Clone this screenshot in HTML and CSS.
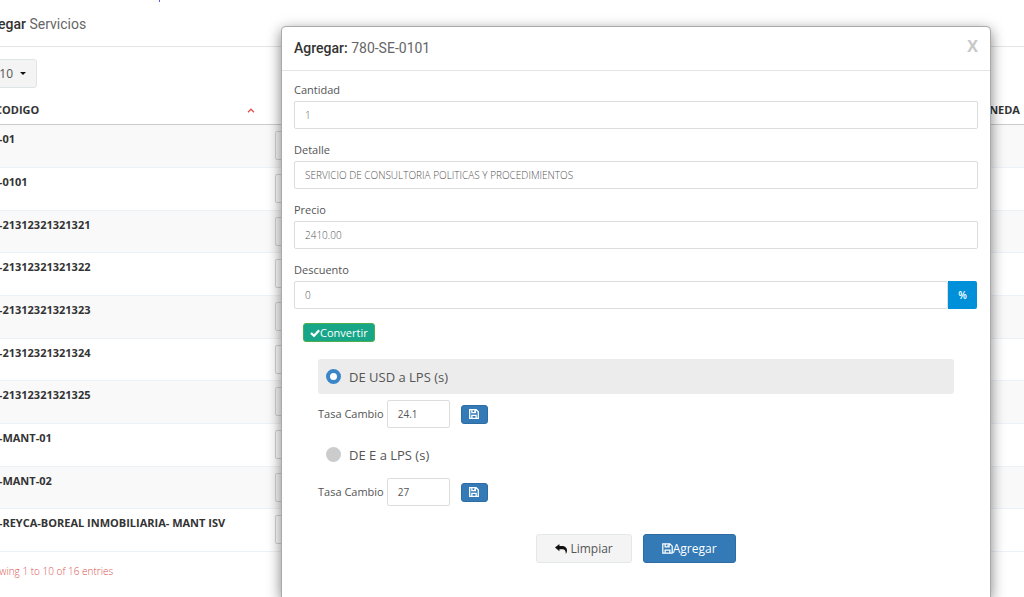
FILE: index.html
```html
<!DOCTYPE html>
<html lang="es">
<head>
  <meta charset="UTF-8">
  <title>Agregar Servicios</title>
  <link rel="stylesheet" href="styles.css">
</head>
<body>
  <div class="page">
    <div class="tick"></div>
    <h4 class="page-title"><b>Agregar</b> Servicios</h4>
    <div class="toolbar">
      <button class="length" type="button">10 <span class="caret"></span></button>
    </div>
    <table class="services">
      <thead>
        <tr>
          <th class="col-code"><span>CODIGO</span>
            <svg class="sort" width="8" height="5" viewBox="0 0 8 5"><path d="M1 4.2L4 1.2L7 4.2" fill="none" stroke="#d9534f" stroke-width="1.3"/></svg>
          </th>
          <th></th>
          <th class="col-coin">MONEDA</th>
        </tr>
      </thead>
      <tbody>
        <tr><td>780-01</td><td><input type="text" aria-label="Detalle"></td><td></td></tr>
        <tr><td>780-0101</td><td><input type="text" aria-label="Detalle"></td><td></td></tr>
        <tr><td>780-21312321321321</td><td><input type="text" aria-label="Detalle"></td><td></td></tr>
        <tr><td>780-21312321321322</td><td><input type="text" aria-label="Detalle"></td><td></td></tr>
        <tr><td>780-21312321321323</td><td><input type="text" aria-label="Detalle"></td><td></td></tr>
        <tr><td>780-21312321321324</td><td><input type="text" aria-label="Detalle"></td><td></td></tr>
        <tr><td>780-21312321321325</td><td><input type="text" aria-label="Detalle"></td><td></td></tr>
        <tr><td>780-MANT-01</td><td><input type="text" aria-label="Detalle"></td><td></td></tr>
        <tr><td>780-MANT-02</td><td><input type="text" aria-label="Detalle"></td><td></td></tr>
        <tr><td>780-REYCA-BOREAL INMOBILIARIA- MANT ISV</td><td><input type="text" aria-label="Detalle"></td><td></td></tr>
      </tbody>
    </table>
    <p class="info">Showing 1 to 10 of 16 entries</p>
  </div>

  <div class="modal">
    <div class="modal-header">
      <h4><b>Agregar:</b> 780-SE-0101</h4>
      <button class="close" type="button">X</button>
    </div>
    <form class="modal-body">
      <div class="form-group">
        <label for="cantidad">Cantidad</label>
        <input class="form-control" type="text" id="cantidad" value="1">
      </div>
      <div class="form-group">
        <label for="detalle">Detalle</label>
        <input class="form-control" type="text" id="detalle" value="SERVICIO DE CONSULTORIA POLITICAS Y PROCEDIMIENTOS">
      </div>
      <div class="form-group">
        <label for="precio">Precio</label>
        <input class="form-control" type="text" id="precio" value="2410.00">
      </div>
      <div class="form-group">
        <label for="descuento">Descuento</label>
        <div class="input-group">
          <input class="form-control" type="text" id="descuento" value="0">
          <button class="addon" type="button">%</button>
        </div>
      </div>
      <button class="btn-convert" type="button"><svg width="10" height="8" viewBox="0 0 10 8"><path d="M1 4L4 6.8L9.2 1.2" fill="none" stroke="#fff" stroke-width="2.3"/></svg>Convertir</button>

      <div class="rates">
        <label class="radio active"><input type="radio" name="moneda" checked>DE USD a LPS (s)</label>
        <div class="rate">
          <label for="tasa-usd">Tasa Cambio</label>
          <input class="form-control" type="text" id="tasa-usd" value="24.1">
          <button class="btn-save" type="button" aria-label="Guardar"><svg width="10" height="10" viewBox="0 0 14 14"><path d="M1 1H10L13 4V13H1ZM4 1V5H9V1M4 13V9H10V13" fill="none" stroke="#fff" stroke-width="1.8"/><path d="M7 2H8.4V4H7Z" fill="#fff"/></svg></button>
        </div>
        <label class="radio"><input type="radio" name="moneda">DE E a LPS (s)</label>
        <div class="rate">
          <label for="tasa-eur">Tasa Cambio</label>
          <input class="form-control" type="text" id="tasa-eur" value="27">
          <button class="btn-save" type="button" aria-label="Guardar"><svg width="10" height="10" viewBox="0 0 14 14"><path d="M1 1H10L13 4V13H1ZM4 1V5H9V1M4 13V9H10V13" fill="none" stroke="#fff" stroke-width="1.8"/><path d="M7 2H8.4V4H7Z" fill="#fff"/></svg></button>
        </div>
      </div>

      <div class="actions">
        <button class="btn" type="reset"><svg class="reply" width="12" height="10" viewBox="0 0 12 10"><path d="M0 3.5L4.4 0V2H7C10.5 2 12 4.2 12 6.5C12 8 11.4 9.2 10.8 10C10.9 7 10 5.3 7 5.3H4.4V7.2Z" fill="#111"/></svg>Limpiar</button>
        <button class="btn btn-primary" type="submit"><svg width="11" height="11" viewBox="0 0 14 14"><path d="M1 1H10L13 4V13H1ZM4 1V5H9V1M4 13V9H10V13" fill="none" stroke="#fff" stroke-width="1.6"/><path d="M7 2H8.4V4H7Z" fill="#fff"/></svg>Agregar</button>
      </div>
    </form>
  </div>
</body>
</html>
```
FILE: styles.css
```css
* {
  box-sizing: border-box;
}
body {
  margin: 0;
  height: 100vh;
  overflow: hidden;
  background: #fff;
  color: #555;
  font: 11px/18px "Open Sans", sans-serif;
}
button, input {
  font: inherit;
  color: inherit;
}
button {
  cursor: pointer;
}
h4 {
  margin: 0;
  color: #666;
  font: 400 14px/20px Roboto, sans-serif;
}
h4 b {
  color: #333;
  font-weight: 500;
}

/* services list, scrolled under the left edge */
.page {
  margin-left: -30px;
}
.tick {
  width: 1px;
  height: 2px;
  margin-left: 189px;
  background: #55f;
}
.page-title {
  padding: 12px 0;
  padding-left: 6px;
  border-bottom: 1px solid #e4e4e4;
}
.toolbar {
  padding-top: 12px;
}
.length {
  height: 29px;
  width: 67px;
  padding: 0 10px;
  border: 1px solid #dfe5e7;
  border-radius: 3px;
  background: #f4f4f4;
  display: flex;
  align-items: center;
  justify-content: flex-end;
  gap: 7px;
  font-size: 12px;
}
.caret {
  border: 3px solid transparent;
  border-top: 3px solid #111;
  border-bottom: 0;
}
.services {
  width: 100%;
  margin-top: 8px;
  border-collapse: separate;
  border-spacing: 0;
  table-layout: fixed;
}
.services th {
  height: 29px;
  padding: 0;
  border-bottom: 1px solid #ccc;
  color: #333;
  font-weight: 700;
  text-align: left;
}
.services .col-code {
  width: 298px;
  padding-left: 25px;
}
.services .col-coin {
  width: 54px;
}
.sort {
  float: right;
  margin: 7px 13px 0 0;
}
.services td {
  height: 43px;
  padding: 6px 7px;
  border-bottom: 1px solid #edf2f6;
  vertical-align: top;
  white-space: nowrap;
}
.services tr:nth-child(3n) td {
  height: 42px;
}
.services td:first-child {
  padding: 5px 10px;
  color: #333;
  font-weight: 700;
}
.services tbody tr:nth-child(odd) {
  background: #f9f9f9;
}
.services input {
  display: block;
  width: 100%;
  height: 29px;
  border: 1px solid #d4d4d4;
  border-radius: 2px;
  background: transparent;
}
.info {
  margin: 10px 0 0;
  padding-left: 12px;
  color: #d9534f;
  font-size: 10px;
  font-weight: 300;
}

/* modal */
.modal {
  position: absolute;
  top: 26px;
  bottom: 0;
  left: 281px;
  right: 33px;
  border: 1px solid #aaa;
  border-bottom: 0;
  border-radius: 5px 5px 0 0;
  background: #fff;
  box-shadow: 0 4px 14px rgba(0, 0, 0, .5);
}
.modal-header {
  display: flex;
  justify-content: space-between;
  padding: 11px 12px 12px;
  border-bottom: 1px solid #e5e5e5;
}
.close {
  height: 16px;
  padding: 0;
  border: 0;
  background: none;
  color: #c8c8c8;
  font: 700 16px/16px "Open Sans", sans-serif;
}
.modal-body {
  padding: 10px 12px;
}
.form-group {
  margin-bottom: 12px;
}
.form-group label {
  display: block;
  margin-bottom: 2px;
}
.form-control {
  display: block;
  width: 100%;
  height: 28px;
  padding: 0 10px;
  border: 1px solid #ddd;
  border-radius: 2px;
  background: #fff;
  color: #555;
  font-size: 10px;
  font-weight: 300;
}
.input-group {
  display: flex;
  padding-right: 1px;
}
.input-group .form-control {
  flex: 1;
}
.addon {
  width: 29px;
  padding: 0;
  border: 0;
  border-radius: 0 2px 2px 0;
  background: #0090d9;
  color: #fff;
  font-size: 10px;
  font-weight: 600;
}
.btn-convert {
  display: flex;
  align-items: center;
  height: 19px;
  margin: 14px 0 0 9px;
  padding: 0 6px;
  border: 1px solid #4cae4c;
  border-radius: 3px;
  background: #18a689;
  color: #fff;
}
.rates {
  padding: 17px 24px 0;
}
.radio {
  display: flex;
  align-items: center;
  gap: 8px;
  height: 35px;
  padding: 0 8px;
  border-radius: 3px;
  font-size: 13px;
}
.radio.active {
  background: #ececec;
}
.radio input {
  appearance: none;
  width: 15px;
  height: 15px;
  margin: 0;
  border-radius: 50%;
  background: #ccc;
}
.radio input:checked {
  border: 4px solid #3a87c8;
  background: #fff;
}
.rate {
  display: flex;
  align-items: center;
  margin: 6px 0 9px;
}
.rate .form-control {
  width: 63px;
  margin: 0 11px 0 3px;
  font-weight: 400;
}
.btn-save {
  display: flex;
  align-items: center;
  justify-content: center;
  width: 27px;
  height: 19px;
  padding: 0;
  border: 1px solid #2e6da4;
  border-radius: 3px;
  background: #337ab7;
}
.actions {
  display: flex;
  justify-content: center;
  gap: 11px;
  padding-top: 19px;
}
.btn {
  display: flex;
  align-items: center;
  height: 29px;
  padding: 0 18px;
  border: 1px solid #e3e9e8;
  border-radius: 3px;
  background: #f4f4f4;
  font-size: 12px;
}
.btn .reply {
  margin-right: 3px;
}
.btn-primary {
  border-color: #2e6da4;
  background: #337ab7;
  color: #fff;
}
```
